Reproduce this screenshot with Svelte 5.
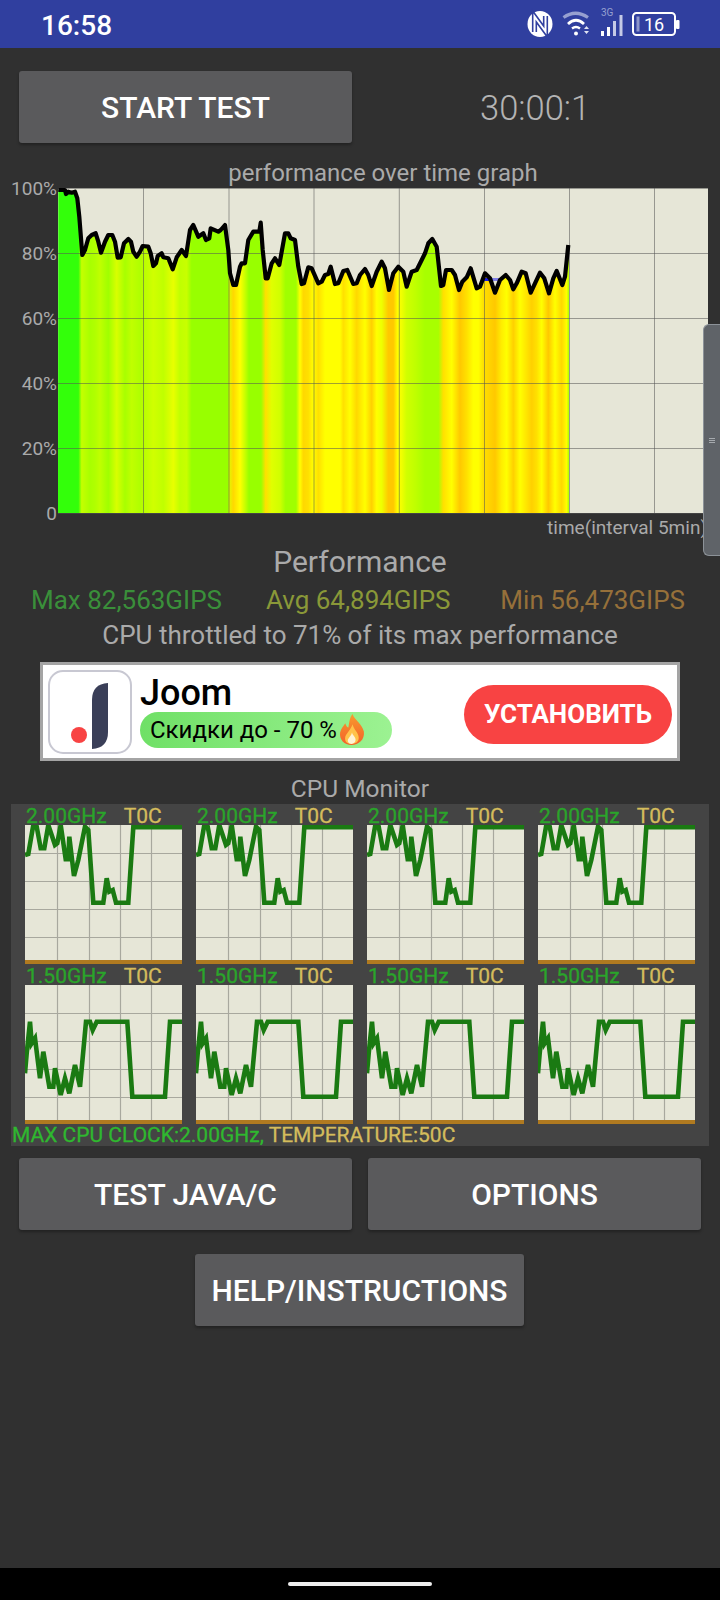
<script>
  // curve read off the graph, in two zoomed pieces
  const left = [[175,60],[195,60],[198,72],[205,65],[215,68],[225,65],[232,85],[238,140],[247,255],[255,240],[265,205],[275,195],[287,190],[295,215],[303,248],[315,215],[325,195],[337,195],[345,215],[353,263],[362,262],[372,220],[385,207],[393,215],[400,245],[410,260],[420,245],[428,228],[445,230],[452,250],[460,288],[468,280],[473,258],[485,250],[490,262],[505,265],[518,298],[530,262],[545,240],[558,258],[570,180],[580,165],[595,200],[610,190],[618,210],[628,205],[632,175],[655,185],[662,180],[675,165],[685,240],[690,310],[700,345],[708,345],[720,290],[725,280],[735,280],[745,210],[760,185],[778,185],[782,158],[788,240],[797,325],[803,325],[815,280],[825,265],[838,285],[855,190],[865,190],[872,205],[885,210],[895,290],[905,342],[912,340],[925,292],[935,295],[955,340],[965,335],[975,315],[985,312],[992,290],[1005,342],[1015,340],[1030,303],[1042,300],[1060,342],[1070,340]];
  const right = [[0,315],[15,297],[25,315],[35,348],[50,305],[65,275],[75,295],[87,360],[100,310],[115,290],[130,305],[140,350],[155,305],[170,300],[185,270],[195,250],[205,220],[217,207],[230,230],[243,348],[250,345],[258,300],[275,300],[285,315],[297,360],[307,335],[320,322],[332,295],[350,355],[360,350],[375,310],[390,325],[405,368],[420,330],[437,315],[450,330],[460,358],[470,340],[485,305],[497,310],[512,368],[525,340],[540,308],[553,325],[567,370],[580,325],[590,303],[607,345],[615,320],[625,225]];
  const curve = [
    ...left.map(([x, y]) => [x / 3, y / 3 - 10]),
    ...right.map(([x, y]) => [x / 3 + 360, y / 3 - 10])
  ];
  const line = curve.map((p) => p[0].toFixed(1) + ',' + p[1].toFixed(1)).join(' ');
  const area = `58,333 ${line} 569,75 569,333`;

  const heatLeft = [[175,'#33ff0a'],[235,'#33ff0a'],[245,'#c5ff00'],[270,'#a8ff00'],[285,'#b0ff00'],[300,'#c0ff00'],[325,'#a0ff00'],[350,'#d8ff00'],[375,'#a8ff00'],[395,'#c0ff00'],[420,'#b0ff00'],[460,'#d0ff00'],[490,'#c0ff00'],[520,'#e8ff00'],[540,'#c0ff00'],[560,'#c8ff00'],[575,'#98ff00'],[683,'#98ff00']];
  const heatRight = [[15,'#e8f000'],[25,'#ffd800'],[45,'#ffff00'],[60,'#c8ff00'],[72,'#98ff00'],[108,'#98ff00'],[122,'#ffe000'],[140,'#e0ff00'],[165,'#d0ff00'],[182,'#a0ff00'],[213,'#a0ff00'],[225,'#ffff00'],[235,'#ffd800'],[250,'#ffe000'],[265,'#ffff00'],[280,'#ffe000'],[300,'#ffff00'],[345,'#ffff00'],[355,'#ffe000'],[375,'#ffff00'],[395,'#ffd800'],[420,'#ffff00'],[440,'#ffd000'],[455,'#ffff00'],[470,'#eeff00'],[490,'#ffc800'],[505,'#ffc800'],[518,'#ffff00'],[530,'#f0ff00'],[545,'#d0ff00'],[570,'#c0ff00'],[600,'#a8ff00'],[640,'#a8ff00'],[655,'#ffe000'],[680,'#ffff00'],[705,'#ffc800'],[725,'#ffe000'],[745,'#ffff00'],[760,'#ffff00'],[775,'#ffe000'],[810,'#ffc800'],[830,'#ffee00'],[845,'#ffff00'],[865,'#ffd000'],[885,'#ffff00'],[920,'#ffd000'],[935,'#ffe000'],[950,'#ffff00'],[970,'#ffc800'],[990,'#ffff00'],[1010,'#ffd800'],[1025,'#ffff00'],[1032,'#a8ff00']];
  const heat = [
    ...heatLeft.map(([x, c]) => [x / 3, c]),
    ...heatRight.map(([x, c]) => [225 + x / 3, c])
  ];

  const yLabels = ['100%', '80%', '60%', '40%', '20%', '0'];
  const hLines = [8, 73, 138, 203, 268, 333];
  const vLines = [143.5, 229, 314, 399.3, 484.5, 569.5, 654.5];

  // core traces, chart local coordinates
  const toLocal = (pts, top) => pts.map(([x, y]) => ((x - 75) / 3).toFixed(1) + ',' + ((y - top) / 3).toFixed(1)).join(' ');
  const bigTrace = toLocal([[75,225],[85,222],[100,135],[110,140],[122,205],[133,205],[145,135],[165,195],[172,190],[182,135],[197,238],[205,238],[208,170],[222,288],[235,240],[255,140],[265,150],[280,368],[310,368],[320,295],[328,335],[338,330],[348,368],[385,368],[400,142],[546,142]], 135);
  const littleTrace = toLocal([[75,880],[80,820],[90,725],[95,790],[105,775],[120,895],[130,815],[148,920],[160,920],[165,865],[182,945],[195,895],[208,940],[225,855],[240,920],[258,725],[270,725],[278,750],[290,725],[382,725],[397,950],[495,950],[510,725],[546,725]], 615);
  const bigCores = [0, 1, 2, 3];
  const littleCores = [0, 1, 2, 3];
  const coreH = [28, 56, 84, 112];
  const coreV = [32, 64, 95, 126];
</script>

<div class="page">
  <div class="status">
    <span class="clock">16:58</span>
    <svg class="status-icons" width="160" height="48" viewBox="0 0 160 48">
      <g transform="translate(-520 0)">
        <ellipse cx="540" cy="24" rx="12.5" ry="13" fill="#fff" />
        <path d="M534.500 32V16.500L545.500 31.500V16" fill="none" stroke="#303f9f" stroke-width="5.200" />
        <path d="M534.500 33V16.500L545.500 31.500V15" fill="none" stroke="#fff" stroke-width="2" />
        <path d="M563.500 17.500Q575.500 9 588 17.500" fill="none" stroke="#97a0d0" stroke-width="3.200" />
        <path d="M568 24Q576 16.500 584 24" fill="none" stroke="#fff" stroke-width="2.800" />
        <path d="M572 28.500Q576 25.500 580 28.500" fill="none" stroke="#fff" stroke-width="2.400" />
        <circle cx="576" cy="33.500" r="2" fill="#fff" />
        <path d="M584 29L586.500 26L589 29ZM584 31L586.500 34L589 31Z" fill="#dfe2f2" />
        <rect x="601" y="31" width="3" height="5" fill="#fff" />
        <rect x="607" y="27" width="3" height="9" fill="#fff" />
        <rect x="613" y="21" width="3" height="15" fill="#c5cae6" />
        <rect x="619.500" y="15" width="3" height="21" fill="#c5cae6" />
        <text x="601" y="16" class="net">3G</text>
        <rect x="633" y="13" width="42" height="22" rx="3.500" fill="none" stroke="#fff" stroke-width="2" />
        <rect x="636.500" y="16.500" width="3" height="15" fill="#8d96cc" />
        <rect x="676" y="20" width="3.500" height="9" rx="1" fill="#fff" />
        <text x="654" y="30.500" class="batt">16</text>
      </g>
    </svg>
  </div>

  <div class="top-row">
    <button class="btn wide">START TEST</button>
    <span class="timer">30:00:1</span>
  </div>

  <div class="graph-title">performance over time graph</div>

  <div class="graph">
    <svg width="720" height="364" viewBox="0 -4 720 364">
      <defs>
        <linearGradient id="heat" gradientUnits="userSpaceOnUse" x1="0" y1="0" x2="720" y2="0">
          {#each heat as [x, c]}
            <stop offset={x / 720} stop-color={c} />
          {/each}
        </linearGradient>
        <linearGradient id="flame" x1="0" y1="0" x2="0" y2="1">
          <stop offset="0" stop-color="#f79b2e" />
          <stop offset="1" stop-color="#f4602a" />
        </linearGradient>
      </defs>
      <rect x="58" y="8" width="650" height="325" fill="#e6e6d7" />
      <polygon points={area} fill="url(#heat)" />
      {#each hLines as y}
        <line x1="58" x2="708" y1={y + 0.5} y2={y + 0.5} class="grid" />
      {/each}
      {#each vLines as x}
        <line x1={x} x2={x} y1="8" y2="333" class="grid" />
      {/each}
      <line x1="481" x2="490" y1="99.500" y2="99.500" stroke="#1c1ce0" stroke-width="3" />
      <line x1="490" x2="499" y1="99.500" y2="99.500" stroke="#7f7fe6" stroke-width="3" />
      <polyline points={line} fill="none" stroke="#000" stroke-width="4.200" stroke-linejoin="round" />
      {#each yLabels as label, i}
        <text x="57" y={hLines[i] + 7} text-anchor="end" class="axis">{label}</text>
      {/each}
      <text x="707" y="354" text-anchor="end" class="axis">time(interval 5min)</text>
    </svg>
    <div class="handle">
      <span></span><span></span><span></span>
    </div>
  </div>

  <div class="perf">Performance</div>
  <div class="stats">
    <span class="max">Max 82,563GIPS</span>
    <span class="avg">Avg 64,894GIPS</span>
    <span class="min">Min 56,473GIPS</span>
  </div>
  <div class="throttle">CPU throttled to 71% of its max performance</div>

  <div class="ad">
    <div class="ad-icon">
      <svg width="80" height="80" viewBox="0 0 80 80">
        <path d="M42 28Q42 12 58 11V60Q58 76 42 77Z" fill="#3a3f58" />
        <circle cx="29" cy="63" r="8" fill="#f84343" />
      </svg>
    </div>
    <div class="ad-text">
      <div class="ad-name">Joom</div>
      <div class="ad-pill">
        <span>Скидки до - 70 %</span>
        <svg width="26" height="31" viewBox="0 0 25 30">
          <path d="M13 0C15 6 22 9 24 17C25 25 19 30 12 30C5 30 0 25 1 18C2 14 4 12 6 9C7 12 8 13 9 13C10 8 10 4 13 0Z" fill="url(#flame)" />
          <path d="M13 10C14 15 19 18 19 23C19 27 16 29 12 29C8 29 5 27 6 22C7 19 11 16 13 10Z" fill="#ffc24a" />
          <path d="M12.500 18C13 21 16 22 16 25C16 27.500 14 29 12 29C10 29 8 27.500 8.500 25C9 23 12 21 12.500 18Z" fill="#fff3d6" />
        </svg>
      </div>
    </div>
    <div class="ad-cta">УСТАНОВИТЬ</div>
  </div>

  <div class="monitor-title">CPU Monitor</div>

  <div class="panel">
    <div class="cores">
      {#each bigCores as core (core)}
        <div class="core">
          <div class="core-label"><span class="freq">2.00GHz</span><span class="temp">T0C</span></div>
          <svg class="chart" width="157" height="139" viewBox="0 0 157 139">
            {#each coreH as y}<line x1="0" x2="157" y1={y + 0.5} y2={y + 0.5} class="chart-grid" />{/each}
            {#each coreV as x}<line x1={x + 0.5} x2={x + 0.5} y1="0" y2="135" class="chart-grid" />{/each}
            <polyline points={bigTrace} class="trace" />
          </svg>
        </div>
      {/each}
      {#each littleCores as core (core)}
        <div class="core">
          <div class="core-label"><span class="freq">1.50GHz</span><span class="temp">T0C</span></div>
          <svg class="chart" width="157" height="139" viewBox="0 0 157 139">
            {#each coreH as y}<line x1="0" x2="157" y1={y + 0.5} y2={y + 0.5} class="chart-grid" />{/each}
            {#each coreV as x}<line x1={x + 0.5} x2={x + 0.5} y1="0" y2="135" class="chart-grid" />{/each}
            <polyline points={littleTrace} class="trace" />
          </svg>
        </div>
      {/each}
    </div>
    <div class="clock-line"><span class="freq">MAX CPU CLOCK:2.00GHz,</span> <span class="temp">TEMPERATURE:50C</span></div>
  </div>

  <div class="btn-row">
    <button class="btn wide">TEST JAVA/C</button>
    <button class="btn wide">OPTIONS</button>
  </div>
  <div class="help-row">
    <button class="btn help">HELP/INSTRUCTIONS</button>
  </div>

  <div class="nav"><span></span></div>
</div>

<style>
  :global(body) {
    margin: 0;
    background: #303030;
  }

  .page {
    width: 720px;
    height: 1600px;
    display: flex;
    flex-direction: column;
    background: #303030;
    font-family: Roboto, "Noto Sans", sans-serif;
    color: #aaa;
    overflow: hidden;
  }

  .status {
    height: 48px;
    flex: none;
    background: #303f9f;
    position: relative;
    display: flex;
    align-items: center;
    justify-content: space-between;
  }
  .clock {
    margin: 3px 0 0 41px;
    color: #fff;
    font-size: 28px;
    font-weight: 500;
  }
  .status-icons {
    display: block;
    margin-right: 40px;
  }
  .net {
    font-size: 10px;
    fill: #97a0d0;
    font-family: Roboto, sans-serif;
  }
  .batt {
    font-size: 18px;
    fill: #fff;
    text-anchor: middle;
    font-family: Roboto, sans-serif;
  }

  .btn {
    height: 72px;
    border: 0;
    border-radius: 3px;
    background: #5a5a5c;
    color: #fff;
    font-family: inherit;
    font-size: 30px;
    font-weight: 500;
    padding: 0;
    box-shadow: 0 2px 3px rgba(0, 0, 0, 0.3);
  }
  .btn.wide {
    width: 333px;
  }
  .btn.help {
    width: 329px;
  }

  .top-row {
    margin: 23px 0 0 19px;
    display: flex;
    align-items: center;
  }
  .timer {
    margin: 2px 0 0 128px;
    font-size: 34.500px;
    font-weight: 300;
    color: #b4b4b4;
  }

  .graph-title {
    height: 33px;
    line-height: 24px;
    padding-top: 18px;
    box-sizing: border-box;
    text-align: center;
    margin-left: 46px;
    font-size: 24px;
    flex: none;
  }

  .graph {
    position: relative;
    height: 364px;
    flex: none;
  }
  .graph svg {
    display: block;
  }
  .grid {
    stroke: #555;
    stroke-opacity: 0.55;
    stroke-width: 1;
  }
  .axis {
    font-size: 19px;
    fill: #aaa;
    font-family: Roboto, sans-serif;
  }

  .handle {
    position: absolute;
    right: 0;
    top: 148px;
    width: 16px;
    height: 230px;
    background: #5f6368;
    border: 1px solid #8c9298;
    border-right: 0;
    border-radius: 6px 0 0 6px;
    display: flex;
    flex-direction: column;
    justify-content: center;
    align-items: center;
    gap: 1px;
  }
  .handle span {
    width: 6px;
    height: 1px;
    background: #a6aaae;
  }

  .perf {
    height: 44px;
    line-height: 44px;
    text-align: center;
    font-size: 30px;
    flex: none;
  }
  .stats {
    height: 32px;
    line-height: 32px;
    font-size: 26px;
    flex: none;
    display: flex;
    padding: 0 35px 0 31px;
    justify-content: space-between;
  }
  .max {
    color: #3a8f3a;
  }
  .avg {
    color: #8a9838;
    margin-right: 6px;
  }
  .min {
    color: #96703a;
  }
  .throttle {
    height: 34px;
    padding-top: 5px;
    box-sizing: border-box;
    text-align: center;
    font-size: 26px;
    flex: none;
    line-height: 29px;
  }

  .ad {
    margin: 12px 0 0 40px;
    width: 640px;
    height: 99px;
    box-sizing: border-box;
    background: #fff;
    border: 3px solid #a4a4a4;
    display: flex;
    align-items: center;
    padding: 0 5px;
    flex: none;
    color: #000;
  }
  .ad-icon {
    width: 84px;
    height: 84px;
    box-sizing: border-box;
    border: 2px solid #c8c8d2;
    border-radius: 15px;
    flex: none;
  }
  .ad-icon svg {
    display: block;
  }
  .ad-text {
    margin: -4px 0 0 8px;
    width: 252px;
    flex: none;
  }
  .ad-name {
    font-size: 36px;
    font-weight: 500;
    line-height: 42px;
    height: 40px;
  }
  .ad-pill {
    height: 36px;
    border-radius: 18px;
    background: linear-gradient(90deg, #6fe066, #9cf292);
    display: flex;
    align-items: center;
    padding-left: 10px;
    font-size: 24px;
    gap: 2px;
  }
  .ad-cta {
    margin: 6px 0 0 72px;
    width: 208px;
    height: 59px;
    line-height: 59px;
    text-align: center;
    border-radius: 30px;
    background: #f84343;
    color: #fff;
    font-size: 26px;
    font-weight: 700;
    flex: none;
  }

  .monitor-title {
    height: 31px;
    line-height: 31px;
    margin-top: 12px;
    text-align: center;
    font-size: 24.500px;
    flex: none;
  }

  .panel {
    margin-left: 11px;
    width: 698px;
    height: 342px;
    background: #444;
    box-sizing: border-box;
    padding: 0 14px;
    flex: none;
  }
  .cores {
    display: grid;
    grid-template-columns: repeat(4, 157px);
    column-gap: 14px;
  }
  .core-label {
    height: 21px;
    line-height: 24px;
    font-size: 21px;
    display: flex;
    gap: 17px;
    padding-left: 1px;
    -webkit-text-stroke: 0.3px currentColor;
  }
  .chart {
    display: block;
    background: linear-gradient(#e6e6d7 135px, #b07a20 135px);
  }
  .chart-grid {
    stroke: #a8a89e;
    stroke-width: 1.200;
  }
  .trace {
    fill: none;
    stroke: #1a7a12;
    stroke-width: 4.600;
    stroke-linejoin: miter;
  }
  .freq {
    color: #2aa52a;
  }
  .temp {
    color: #d4bc5c;
  }
  .clock-line {
    margin: 1px 0 0 -13px;
    white-space: nowrap;
    font-size: 21px;
    line-height: 21px;
    -webkit-text-stroke: 0.3px;
  }
  .clock-line .freq {
    color: #2fb82f;
  }

  .btn-row {
    margin: 12px 19px 0;
    display: flex;
    justify-content: space-between;
    flex: none;
  }
  .help-row {
    margin: 24px 0 0 195px;
    flex: none;
  }

  .nav {
    margin-top: auto;
    height: 32px;
    background: #000;
    display: flex;
    justify-content: center;
    align-items: center;
    flex: none;
  }
  .nav span {
    width: 144px;
    height: 4px;
    border-radius: 2px;
    background: #eee;
  }
</style>
